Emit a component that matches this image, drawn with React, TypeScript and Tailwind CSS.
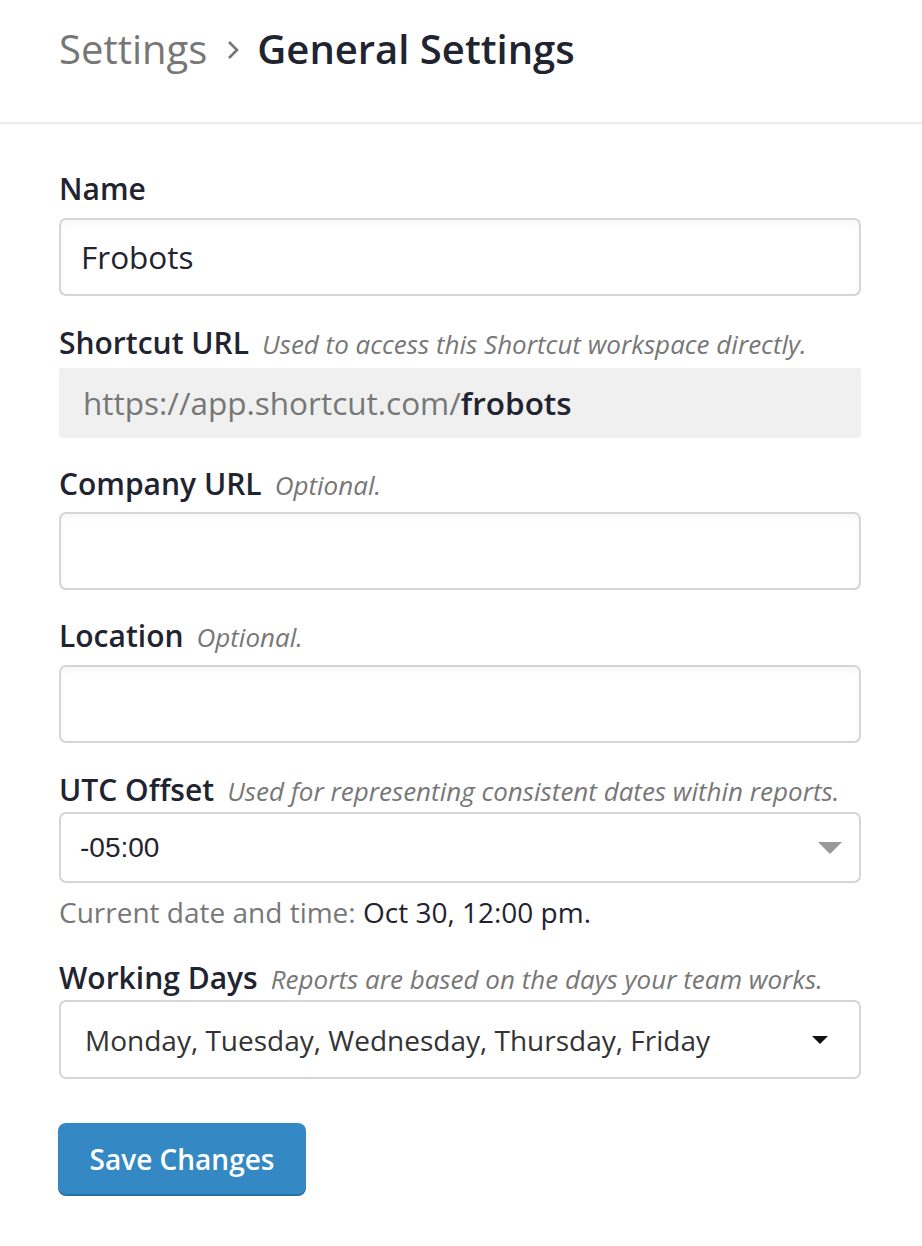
import React from "react";

const font = { fontFamily: '"Open Sans", "Noto Sans", sans-serif' };

function Label({ title, hint, mb }: { title: string; hint?: string; mb: string }) {
  return (
    <div className={`flex items-baseline gap-[13px] ${mb}`}>
      <span className="text-[30px] font-semibold text-[#1f2430] leading-[36px]">{title}</span>
      {hint && <span className="text-[26px] italic text-[#777] leading-[36px]">{hint}</span>}
    </div>
  );
}

function TextInput({ value }: { value?: string }) {
  return (
    <div className="h-[78px] rounded-[7px] border-2 border-[#d6d6d6] bg-white shadow-[inset_0_4px_6px_rgba(0,0,0,0.035)] flex items-center px-[20px] text-[31.5px] text-[#1f2430]">
      {value}
    </div>
  );
}

export default function App() {
  return (
    <div className="min-h-[1246px] bg-white" style={font}>
      <header className="h-[124px] border-b-2 border-[#ebebeb] shadow-[0_1px_2px_rgba(0,0,0,0.03)] flex items-start pt-[22px] px-[59px]">
        <span className="text-[40px] leading-[54px] text-[#777]">Settings</span>
        <svg className="ml-[19px] mr-[17px] mt-[17px]" width="14" height="22" viewBox="0 0 14 22">
          <path d="M3 3l8 8-8 8" fill="none" stroke="#777" strokeWidth="2.6" />
        </svg>
        <span className="text-[40px] leading-[54px] font-semibold text-[#1f2430]">General Settings</span>
      </header>

      <main className="pl-[59px] pr-[61px] pt-[47px] pb-[40px]">
        <section>
          <Label title="Name" mb="mb-[11px]" />
          <TextInput value="Frobots" />
        </section>

        <section className="mt-[29px]">
          <Label title="Shortcut URL" hint="Used to access this Shortcut workspace directly." mb="mb-[6px]" />
          <div className="h-[70px] rounded-[3px] bg-[#f0f0f0] flex items-center px-[24px] text-[31.5px] text-[#777]">
            https://app.shortcut.com/<span className="font-semibold text-[#1f2430]">frobots</span>
          </div>
        </section>

        <section className="mt-[28px]">
          <Label title="Company URL" hint="Optional." mb="mb-[9px]" />
          <TextInput />
        </section>

        <section className="mt-[28px]">
          <Label title="Location" hint="Optional." mb="mb-[10px]" />
          <TextInput />
        </section>

        <section className="mt-[29px]">
          <Label title="UTC Offset" hint="Used for representing consistent dates within reports." mb="mb-[3px]" />
          <div className="h-[71px] rounded-[7px] border-2 border-[#d6d6d6] bg-white flex items-center justify-between pl-[19px] pr-[17px]">
            <span className="text-[28px] text-[#1f2430]" style={{ fontFamily: '"Liberation Sans", Arial, sans-serif' }}>-05:00</span>
            <svg width="24" height="12" viewBox="0 0 24 12">
              <path d="M0 0h24L12 12z" fill="#999" />
            </svg>
          </div>
          <p className="mt-[11px] text-[28px] leading-[36px] text-[#777]">
            Current date and time: <span className="text-[#1f2430]">Oct 30, 12:00 pm.</span>
          </p>
        </section>

        <section className="mt-[30px]">
          <Label title="Working Days" hint="Reports are based on the days your team works." mb="mb-[3px]" />
          <div className="h-[79px] rounded-[7px] border-2 border-[#d6d6d6] bg-white flex items-center justify-between pl-[24px] pr-[31px]">
            <span className="text-[28px] text-[#333]">Monday, Tuesday, Wednesday, Thursday, Friday</span>
            <svg width="16" height="8" viewBox="0 0 16 8">
              <path d="M0 0h16L8 8z" fill="#111" />
            </svg>
          </div>
        </section>

        <button className="mt-[44px] h-[71px] w-[248px] -ml-[1px] rounded-[8px] bg-[#3489c5] shadow-[0_2px_0_#2a70a3] text-white text-[28px] font-semibold flex items-center justify-center">
          Save Changes
        </button>
      </main>
    </div>
  );
}
